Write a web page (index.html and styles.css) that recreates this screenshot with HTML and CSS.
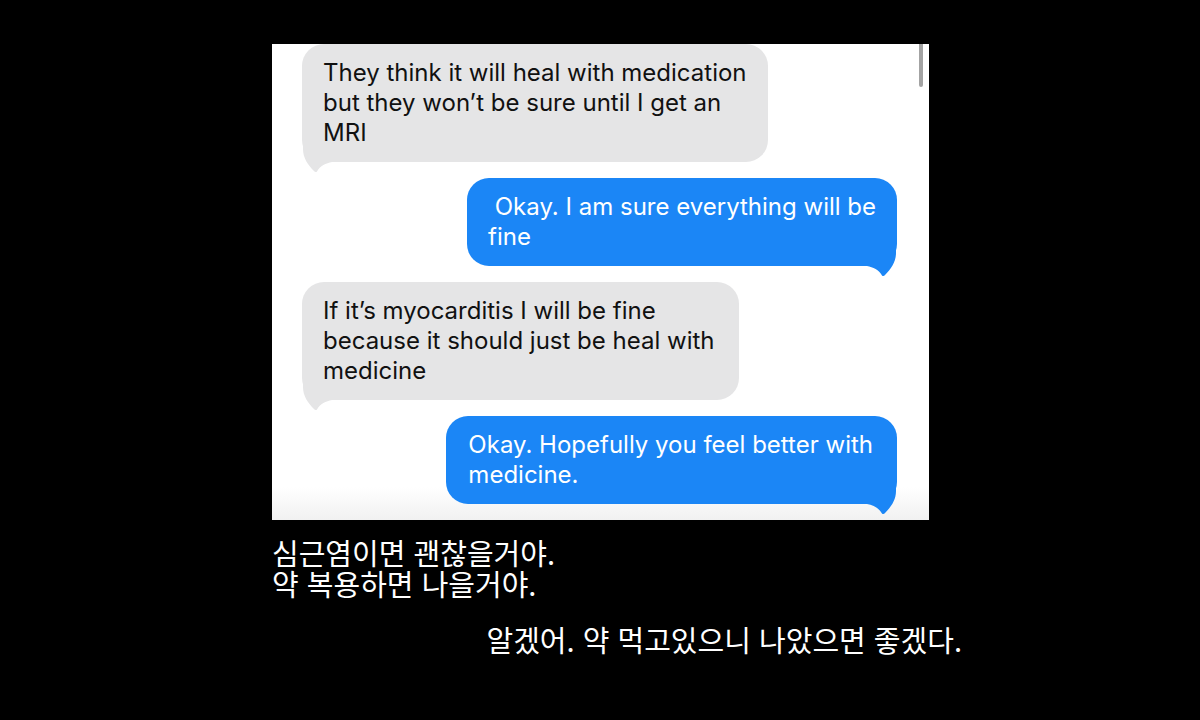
FILE: index.html
```html
<!DOCTYPE html>
<html lang="ko">
<head>
    <meta charset="UTF-8">
    <meta name="viewport" content="width=device-width, initial-scale=1.0">
    <title>심근염 대화</title>
    <link rel="stylesheet" href="styles.css">
</head>
<body>
    <div class="stage">
        <!-- 캡처된 메시지 화면 -->
        <div class="chat">
            <div class="scrollbar"></div>

            <div class="msg in">
                They think it will heal with medication<br>
                but they won’t be sure until I get an<br>
                MRI
                <svg class="tail" width="30" height="28" viewBox="0 0 30 28"><path d="M0 0 H29 V5 C29 14 24 21 18 27 C17 28 15.5 28.5 15 27.5 C12 22 6 19 0 18 Z"/></svg>
            </div>

            <div class="msg out">
                &nbsp;Okay. I am sure everything will be<br>
                fine
                <svg class="tail" width="30" height="28" viewBox="0 0 30 28"><path d="M0 0 H29 V5 C29 14 24 21 18 27 C17 28 15.5 28.5 15 27.5 C12 22 6 19 0 18 Z"/></svg>
            </div>

            <div class="msg in wide">
                If it’s myocarditis I will be fine<br>
                because it should just be heal with<br>
                medicine
                <svg class="tail" width="30" height="28" viewBox="0 0 30 28"><path d="M0 0 H29 V5 C29 14 24 21 18 27 C17 28 15.5 28.5 15 27.5 C12 22 6 19 0 18 Z"/></svg>
            </div>

            <div class="msg out wide">
                Okay. Hopefully you feel better with<br>
                medicine.
                <svg class="tail" width="30" height="28" viewBox="0 0 30 28"><path d="M0 0 H29 V5 C29 14 24 21 18 27 C17 28 15.5 28.5 15 27.5 C12 22 6 19 0 18 Z"/></svg>
            </div>
        </div>

        <!-- 자막 -->
        <div class="subs">
            <p class="sub">심근염이면 괜찮을거야.<br>약 복용하면 나을거야.</p>
            <p class="sub reply">알겠어. 약 먹고있으니 나았으면 좋겠다.</p>
        </div>
    </div>
</body>
</html>
```

FILE: styles.css
```css
body {
    margin: 0;
    padding: 0;
    background-color: #000;
    font-family: 'Inter', 'Liberation Sans', sans-serif;
}

.stage {
    width: 1200px;
    height: 720px;
    box-sizing: border-box;
    padding: 44px 0 0 272px;
}

.chat {
    position: relative;
    width: 657px;
    height: 476px;
    box-sizing: border-box;
    padding: 0 32px 0 30px;
    display: flex;
    flex-direction: column;
    gap: 16px;
    overflow: hidden;
    background: linear-gradient(#fff 93%, #f1f1f1);
}

.scrollbar {
    position: absolute;
    top: 0;
    right: 6px;
    width: 4px;
    height: 43px;
    border-radius: 0 0 2px 2px;
    background-color: #a3a3a3;
}

.msg {
    position: relative;
    padding: 14px 21px;
    border-radius: 22px;
    font-size: 24px;
    line-height: 30px;
    white-space: nowrap;
}

.msg.wide {
    padding-right: 24px;
}

.msg.out.wide {
    padding-left: 22px;
}

.msg.in {
    align-self: flex-start;
    background-color: #e5e5e6;
    color: #111;
}

.msg.out {
    align-self: flex-end;
    background-color: #1b86f6;
    color: #fff;
}

.msg .tail {
    position: absolute;
    bottom: -10px;
    right: 0;
}

.msg.in .tail {
    right: auto;
    left: 0;
    transform: scaleX(-1);
    fill: #e5e5e6;
}

.msg.out .tail {
    fill: #1b86f6;
}

.subs {
    width: 690px;
    display: flex;
    flex-direction: column;
    margin-top: 17px;
}

.sub {
    margin: 0;
    color: #fff;
    font-family: 'Noto Sans CJK KR', sans-serif;
    font-size: 29px;
    line-height: 31px;
}

.sub.reply {
    align-self: flex-end;
    margin-top: 25px;
}
```
